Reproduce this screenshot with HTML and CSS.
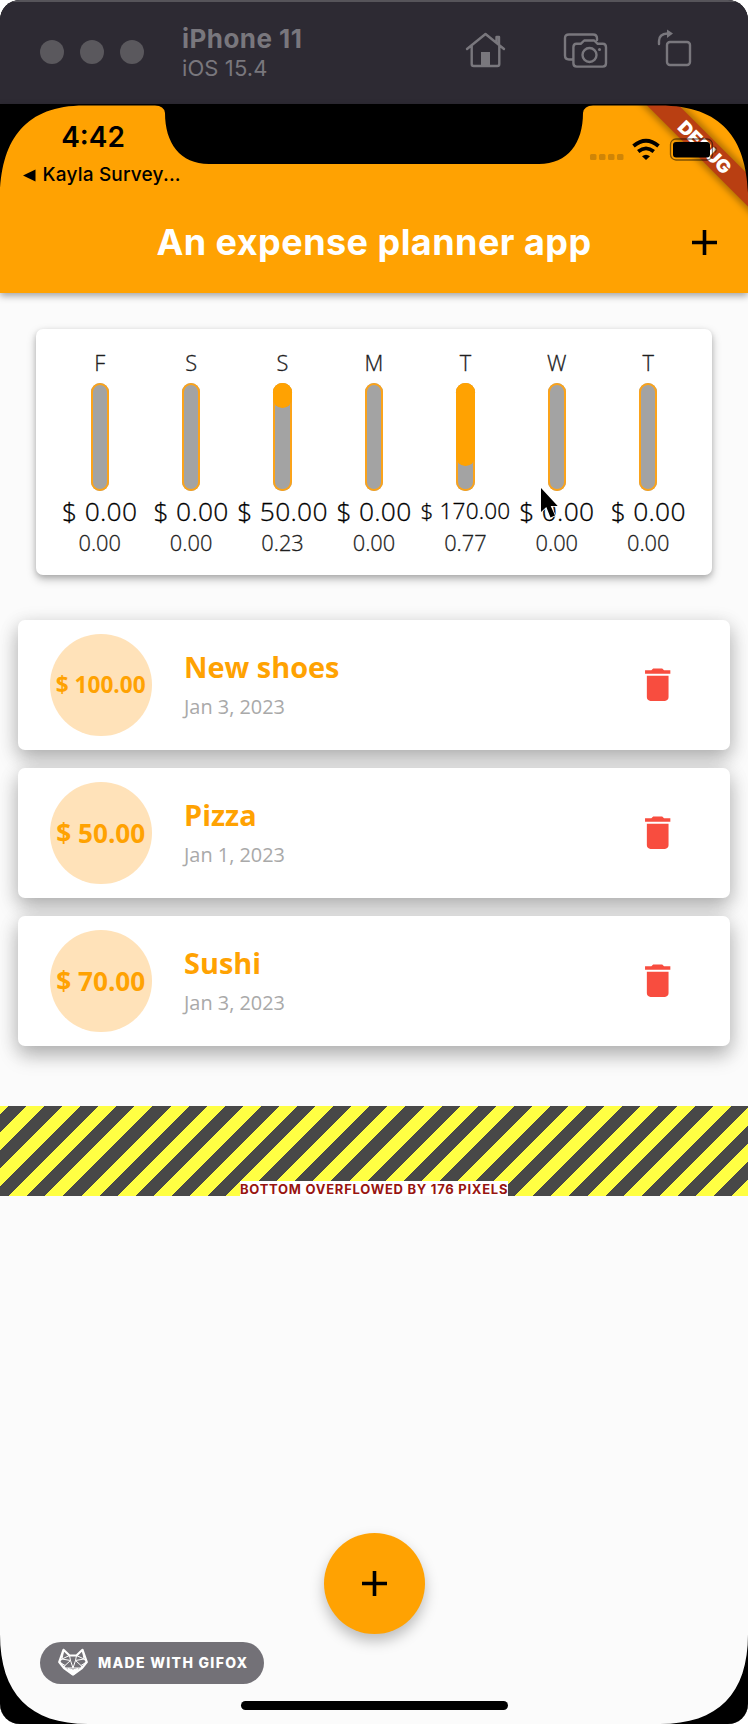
FILE: index.html
```html
<!DOCTYPE html>
<html lang="en">
<head>
<meta charset="utf-8">
<title>An expense planner app</title>
<link rel="stylesheet" href="styles.css">
</head>
<body>
<div class="window">
  <header class="titlebar">
    <div class="lights"><i></i><i></i><i></i></div>
    <div class="device"><strong>iPhone 11</strong><span>iOS 15.4</span></div>
    <svg class="tool tool-home" width="42" height="40" viewBox="464 30 42 40"><path d="M467 49 485.500 34 504 49M471.700 46v18q0 2 2 2h23.600q2 0 2-2V46M496.500 42v-5h2.500v7.500"/><path class="solid" d="M481 52h9v14h-9z"/></svg>
    <svg class="tool tool-camera" width="46" height="40" viewBox="562 30 46 40"><path d="M572 59.500h-3q-4 0-4-4V38q0-3.500 4-3.500h24q4 0 4 4v1.500M576.500 43.800h4.200l3.500-3.300h10l3.500 3.300h5q3.300 0 3.300 3.500v16q0 3.300-3.300 3.300h-26q-3.300 0-3.300-3.300v-16q0-3.500 3.100-3.500z"/><circle cx="589.500" cy="55" r="7"/><circle class="solid" cx="599.500" cy="49.500" r="1.500"/></svg>
    <svg class="tool" width="38" height="42" viewBox="656 28 38 42"><rect x="667" y="42" width="23" height="23" rx="3"/><path d="M659 44v-3q0-7 8.500-7.500"/><path class="solid" d="M667 29.500 673 33.500 667 38z"/></svg>
  </header>
  <main class="screen">
    <div class="topbar">
      <div class="status">
        <time>4:42</time>
        <div class="back"><svg width="13" height="13" viewBox="0 0 13 13"><path d="M0 6.500 12.500.500v12z"/></svg><span>Kayla Survey...</span></div>
      </div>
      <h1>An expense planner app</h1>
      <svg class="plus appbar-plus" viewBox="0 0 25 25"><path d="M12.500 0v25M0 12.500h25"/></svg>
    </div>
    <section class="chart">
      <div class="day"><b>F</b><div class="bar"></div><span class="amount">$ 0.00</span><em>0.00</em></div>
      <div class="day"><b>S</b><div class="bar"></div><span class="amount">$ 0.00</span><em>0.00</em></div>
      <div class="day"><b>S</b><div class="bar"><div class="fill" style="height:23%"></div></div><span class="amount">$ 50.00</span><em>0.23</em></div>
      <div class="day"><b>M</b><div class="bar"></div><span class="amount">$ 0.00</span><em>0.00</em></div>
      <div class="day"><b>T</b><div class="bar"><div class="fill" style="height:77%"></div></div><span class="amount fitted">$ 170.00</span><em>0.77</em></div>
      <div class="day"><b>W</b><div class="bar"></div><span class="amount">$ 0.00</span><em>0.00</em></div>
      <div class="day"><b>T</b><div class="bar"></div><span class="amount">$ 0.00</span><em>0.00</em></div>
    </section>
    <section class="list">
      <article class="item"><div class="avatar fitted">$ 100.00</div><div class="info"><h2>New shoes</h2><p>Jan 3, 2023</p></div><svg class="trash" viewBox="0 0 24 24"><path d="M6 19c0 1.100.9 2 2 2h8c1.100 0 2-.9 2-2V7H6v12zM19 4h-3.500l-1-1h-5l-1 1H5v2h14V4z"/></svg></article>
      <article class="item"><div class="avatar">$ 50.00</div><div class="info"><h2>Pizza</h2><p>Jan 1, 2023</p></div><svg class="trash" viewBox="0 0 24 24"><path d="M6 19c0 1.100.9 2 2 2h8c1.100 0 2-.9 2-2V7H6v12zM19 4h-3.500l-1-1h-5l-1 1H5v2h14V4z"/></svg></article>
      <article class="item"><div class="avatar">$ 70.00</div><div class="info"><h2>Sushi</h2><p>Jan 3, 2023</p></div><svg class="trash" viewBox="0 0 24 24"><path d="M6 19c0 1.100.9 2 2 2h8c1.100 0 2-.9 2-2V7H6v12zM19 4h-3.500l-1-1h-5l-1 1H5v2h14V4z"/></svg></article>
    </section>
    <div class="overflow"><span>BOTTOM OVERFLOWED BY 176 PIXELS</span></div>
    <footer class="bottom">
      <div class="fab"><svg class="plus" viewBox="0 0 25 25"><path d="M12.500 0v25M0 12.500h25"/></svg></div>
      <div class="badge">
        <svg class="fox" viewBox="0 0 30 28"><path class="head" d="M5.500 1.800 11.500 7.500h7L24.500 1.800 28.800 14 24 20l-9 6.500L6 20 1.200 14z"/><path d="M5.500 3 4 11l7.500-3.500M24.500 3 26 11l-7.500-3.500M4 11l8.500 1.500L15 20l2.500-7.500L26 11M1.500 14 4 11M28.500 14 26 11M12.500 12.500 7 17.500 1.500 14M17.500 12.500 23 17.500 28.500 14M7 17.500 6 20l9 0 9 0-1-2.500M11.500 7.500l1 5M18.500 7.500l-1 5"/><path class="nose" d="m10 20.500 5 1.500 5-1.500-3 5-2 1.500-2-1.500z"/></svg>
        <span>MADE WITH GIFOX</span>
      </div>
      <div class="home-indicator"></div>
    </footer>
  </main>
  <svg class="overlay" width="748" height="1724" viewBox="0 0 748 1724">
    <defs>
      <filter id="soft" x="-20%" y="-20%" width="140%" height="140%"><feGaussianBlur stdDeviation="3"/></filter>
      <clipPath id="display"><path d="M600 105H748V300H600z"/></clipPath>
    </defs>
    <g clip-path="url(#display)">
      <path d="M642 84.500 768 210.500" stroke="#000" stroke-opacity=".3" stroke-width="29" filter="url(#soft)"/>
      <path d="M642 84.500 768 210.500" stroke="#b93f12" stroke-width="22.500"/>
      <text class="debug" transform="translate(704.700 147.300) rotate(45)" text-anchor="middle" y="6.500" textLength="67" lengthAdjust="spacingAndGlyphs">DEBUG</text>
    </g>
    <g fill="#cf8507"><rect x="590" y="154" width="6.500" height="6" rx="1.500"/><rect x="599" y="154" width="6.500" height="6" rx="1.500"/><rect x="608" y="154" width="6.500" height="6" rx="1.500"/><rect x="617" y="154" width="6.500" height="6" rx="1.500"/></g>
    <g fill="none" stroke="#000" stroke-width="3.800"><path d="M633.500 146q12.500-10.500 25 0M638.200 151.500q7.800-6.200 15.600 0"/></g><path d="M642 156.300q4-3 8 0L646 160z"/>
    <rect x="670.500" y="139" width="42" height="21" rx="5.500" fill="none" stroke="#000" stroke-opacity=".5" stroke-width="1.300"/><rect x="673" y="142" width="37" height="15.500" rx="3"/><path d="M714.500 146v7q2.500-1 2.500-3.500t-2.500-3.500z" fill-opacity=".4"/>
    <path d="M0 104H748V193C746 139 722 105.500 660 105.500H593Q584 105.500 583 113C583 143 568 164 539 164H209C180 164 165 143 165 113Q164 105.500 155 105.500H84C26 105.500 2 139 0 193z"/>
    <path d="M0 1634V1724H88C30 1724 0 1694 0 1634zM748 1634V1724H660C718 1724 748 1694 748 1634z"/>
    <path d="M541 488v24l5.300-5 4.200 10.500 4.500-2-4.300-9.500h7z" stroke="#fff" stroke-width="1.500" paint-order="stroke"/>
  </svg>
</div>
</body>
</html>
```
FILE: styles.css
```css
* { box-sizing: border-box; }
body { margin: 0; background: #fff; }
h1, h2, p { margin: 0; }
.window { position: relative; display: flex; flex-direction: column; width: 748px; height: 1724px; border-radius: 20px; overflow: hidden; background: #000; font-family: "Open Sans", "Noto Sans", sans-serif; }
.overlay { position: absolute; left: 0; top: 0; }

.titlebar { display: flex; height: 104px; padding-left: 40px; background: #2d2a33; border-top: 2px solid #56545a; color: #79777d; font-family: Inter, sans-serif; }
.lights { display: flex; gap: 16px; margin-top: 38px; }
.lights i { width: 24px; height: 24px; border-radius: 50%; background: #5a585d; }
.device { display: flex; flex-direction: column; width: 282px; margin: 21px 0 0 38px; }
.device strong { font-size: 26px; line-height: 32px; font-weight: 700; letter-spacing: .45px; }
.device span { font-size: 22px; line-height: 26px; letter-spacing: .1px; }
.tool { fill: none; stroke: #79777d; stroke-width: 2.4; stroke-linejoin: round; stroke-linecap: round; margin-top: 28px; }
.tool .solid { fill: #79777d; stroke: none; }
.tool-home, .tool-camera { margin-right: 56px; }
.tool-camera { margin-right: 48px; }
.tool:last-child { margin-top: 26px; }

.screen { display: flex; flex-direction: column; flex: 1; background: #fbfbfb; }
.topbar { display: grid; grid-template: 80px 109px / 1fr auto 1fr; height: 189px; background: #ffa202; box-shadow: 0 3px 7px rgba(0,0,0,.35); font-family: Inter, sans-serif; }
.status { grid-column: 1 / 4; padding-top: 15px; }
.status time { display: block; width: 186px; text-align: center; font-weight: 600; font-size: 28px; line-height: 36px; letter-spacing: 0; }
.back { display: flex; align-items: center; gap: 7px; margin: 8px 0 0 22.5px; font-size: 19px; line-height: 24px; font-weight: 500; white-space: nowrap; letter-spacing: .2px; }
h1 { grid-column: 2; align-self: center; padding-top: 6px; color: #fff; font-size: 36px; line-height: 44px; font-weight: 700; white-space: nowrap; letter-spacing: .45px; }
.plus { width: 25px; height: 25px; stroke: #000; stroke-width: 3.6; }
.appbar-plus { justify-self: end; align-self: center; margin: 8px 31px 0 0; }

.chart { display: flex; height: 246px; margin: 36px 36px 0; padding: 18px; border-radius: 7px; background: #fff; box-shadow: 0 4px 10px rgba(0,0,0,.27), 0 2px 5px rgba(0,0,0,.12); color: #202020; }
.day { display: flex; flex: 1 1 0; min-width: 0; flex-direction: column; align-items: center; white-space: nowrap; -webkit-text-stroke: .3px; }
.day b, .day em { font: 300 21.8px/30px "Open Sans", sans-serif; }
.day b { height: 36px; line-height: 31px; }
.bar { width: 18.4px; height: 109px; box-shadow: inset 0 0 0 2px #fba31a; border-radius: 9.2px; background: #a3a3a3; }
.fill { border-radius: 9.2px; background: #ffa202; }
.amount { margin-top: 2px; font-size: 26.4px; line-height: 36px; font-weight: 300; color: #000; letter-spacing: .3px; }
.amount.fitted { font-size: 22.6px; letter-spacing: .15px; }
.day em { margin-top: -1px; line-height: 29px; }

.list { display: flex; flex-direction: column; gap: 18px; padding: 45px 18px 60px; }
.item { display: flex; align-items: center; height: 130px; padding: 0 51px 0 32px; border-radius: 7px; background: #fff; box-shadow: 0 10px 20px rgba(0,0,0,.22), 0 4px 20px rgba(0,0,0,.14); }
.avatar { display: flex; align-items: center; justify-content: center; width: 101.5px; height: 101.5px; padding-bottom: 1px; border-radius: 50%; background: #ffe2b9; color: #ffa202; font-size: 26.2px; font-weight: 700; white-space: nowrap; }
.avatar.fitted { font-size: 22.6px; }
.info { flex: 1; margin-left: 32.5px; padding-bottom: 2px; }
.info h2 { color: #ffa202; font-size: 28.9px; line-height: 40px; font-weight: 700; }
.info p { color: #a9a9a9; font-size: 19.9px; line-height: 28px; margin-top: 6px; }
.trash { width: 43.4px; height: 43.4px; fill: #f84d3f; }

.overflow { display: flex; align-items: flex-end; justify-content: center; height: 90px; background: repeating-linear-gradient(135deg, #ffff43 0 5.9px, #484848 5.9px 18.7px, #ffff43 18.7px 25.56px); }
.overflow span { width: 268px; height: 15px; background: #fff; color: #981410; font: 700 13px/16px Inter, sans-serif; letter-spacing: .74px; text-align: center; white-space: nowrap; }

.bottom { display: flex; flex: 1; flex-direction: column; justify-content: flex-end; align-items: center; padding-bottom: 14px; }
.fab { display: flex; align-items: center; justify-content: center; width: 101px; height: 101px; border-radius: 50%; background: #ffa202; box-shadow: 0 7px 14px rgba(0,0,0,.25); }
.badge { align-self: flex-start; display: flex; align-items: center; width: 224px; height: 42px; margin: 8px 0 17px 40px; padding-left: 18px; border-radius: 21px; background: #737177; color: #fff; font: 800 14px/42px Inter, sans-serif; white-space: nowrap; letter-spacing: 1.3px; }
.fox { width: 30px; height: 28px; margin-right: 10px; margin-top: -2px; fill: none; stroke: #fff; stroke-width: 1; stroke-linejoin: round; }
.fox .head { stroke-width: 2.2; }
.fox .nose { fill: #fff; }
.home-indicator { width: 267px; height: 9px; border-radius: 5px; background: #000; }
.debug { fill: #fff; font: 900 18px Inter, sans-serif; }
```
